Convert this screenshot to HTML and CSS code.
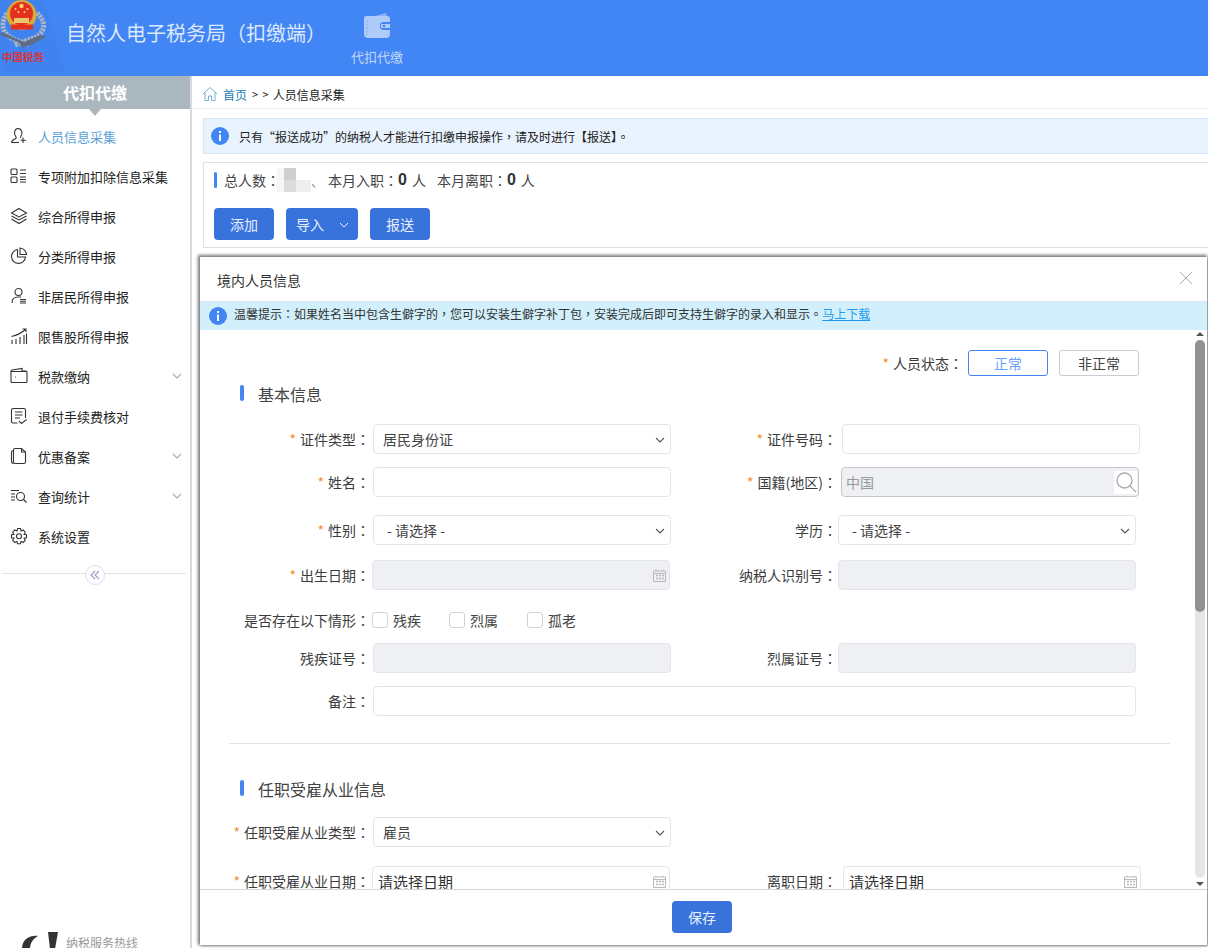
FILE: index.html
```html
<!DOCTYPE html>
<html lang="zh-CN">
<head>
<meta charset="utf-8">
<title>自然人电子税务局（扣缴端）</title>
<link rel="stylesheet" href="styles.css">
</head>
<body>
<div class="app">
  <header class="topbar">
    <svg class="logo" viewBox="0 0 65 76" width="65" height="76">
      <polygon points="0,0 44,0 65,72 8,72 0,60" fill="#3f82f0"/>
      <g fill="none" stroke="#aab5c3" stroke-width="5" stroke-dasharray="2.5 1">
        <path d="M7 13 C0 24 2 33 13 39 L30 45"/>
        <path d="M37 13 C46 22 46 31 36 37 L15 45"/>
      </g>
      <path d="M0 35 L18 42 L23 48 L33 44 L46 37 L40 35 L24 42 L15 38 L2 32Z" fill="#5f6d86"/>
      <circle cx="21.500" cy="15" r="15" fill="#d9a93a"/>
      <circle cx="21.500" cy="13.500" r="11.500" fill="#e6301f"/>
      <rect x="14" y="18" width="15" height="5" fill="#e6c76c"/>
      <rect x="11" y="24.500" width="22" height="5" fill="#e6301f"/>
      <g fill="#f6d76a"><circle cx="21.500" cy="6" r="2.200"/><circle cx="15.500" cy="9" r="1"/><circle cx="27.500" cy="9" r="1"/><circle cx="18.500" cy="12" r="1"/><circle cx="24.500" cy="12" r="1"/></g>
      <text class="logo-text" x="2" y="61">中国税务</text>
    </svg>
    <h1 class="title">自然人电子税务局（扣缴端）</h1>
    <div class="topnav">
      <svg viewBox="0 0 28 26" width="28" height="26">
        <path d="M9 4 L23 0 L24 4Z" fill="#8eb4f6"/>
        <path d="M3 3 H24 Q27 3 27 6 V9 H21 Q17 9 17 13 Q17 17 21 17 H27 V21 Q27 25 23 25 H5 Q1 25 1 21 V6 Q1 3 3 3Z" fill="#afcbf9"/>
        <path d="M18 10.500 H27.500 V15.500 H18 Q16.500 13 18 10.500Z" fill="#afcbf9" stroke="#4285f4" stroke-width="1"/>
        <circle cx="21" cy="13" r="1.300" fill="#4285f4"/>
        <path d="M4 7 V22" stroke="#7fa9f4" stroke-width="1" stroke-dasharray="2 1.500"/>
      </svg>
      <span>代扣代缴</span>
    </div>
  </header>
  <div class="content">
    <aside class="sidebar">
      <div class="side-title">代扣代缴</div>
      <nav class="menu">
        <a class="menu-item active">
          <svg class="ic" viewBox="0 0 18 18"><path d="M1.500 15.500 C2 12.500 5 12 6 11.500 C6.500 10.500 6 10 5.500 9 C4 7 3.800 2 8 1.500 C12.500 1.500 12.500 7 11 9 C10.500 10 10.500 10.500 10.800 11"/><path d="M1.500 15.500 H9"/><path d="M13 10.500 V16 M10.500 13.300 H16" /></svg>
          <span>人员信息采集</span>
        </a>
        <a class="menu-item">
          <svg class="ic" viewBox="0 0 18 18"><rect x="1" y="2" width="6" height="5.500" rx="1"/><rect x="1" y="10" width="6" height="5.500" rx="1"/><path d="M10 3 H16 M10 6.500 H16 M10 10 H16 M10 12.500 H16 M10 15 H16"/></svg>
          <span>专项附加扣除信息采集</span>
        </a>
        <a class="menu-item">
          <svg class="ic" viewBox="0 0 18 18"><path d="M9 1.500 L16.500 6 L9 10 L1.500 6Z"/><path d="M1.500 9 L9 13 L16.500 9"/><path d="M1.500 12 L9 16.500 L16.500 12"/></svg>
          <span>综合所得申报</span>
        </a>
        <a class="menu-item">
          <svg class="ic" viewBox="0 0 18 18"><path d="M7.500 2.500 A7 7 0 1 0 15.500 10 H7.500Z"/><path d="M10 1 A7 7 0 0 1 16.500 7.500 H10Z"/></svg>
          <span>分类所得申报</span>
        </a>
        <a class="menu-item">
          <svg class="ic" viewBox="0 0 18 18"><circle cx="8.500" cy="5" r="3.500"/><path d="M2 16 C2 12 4.500 10 8 10 H11"/><path d="M10 12.500 H16 M10 14.300 H16 M10 16 H16"/></svg>
          <span>非居民所得申报</span>
        </a>
        <a class="menu-item">
          <svg class="ic" viewBox="0 0 18 18"><path d="M1.500 9.500 C6 8.500 11 6.500 15.500 2.500 M12.500 2 H16 V5"/><path d="M2 13 V17 M6 12 V17 M10 10 V17 M14 8 V17 M16.500 6.500 V17"/></svg>
          <span>限售股所得申报</span>
        </a>
        <a class="menu-item">
          <svg class="ic" viewBox="0 0 18 18"><path d="M2 3 L12 1.500 V4 H16 Q17 4 17 5 V14.500 Q17 15.500 16 15.500 H2 Q1 15.500 1 14.500 V4 Q1 3 2 3Z"/><path d="M1 4.500 H16 M5 10 H5.800"/></svg>
          <span>税款缴纳</span>
          <svg class="caret" viewBox="0 0 10 6"><path d="M1 1 L5 5 L9 1"/></svg>
        </a>
        <a class="menu-item">
          <svg class="ic" viewBox="0 0 18 18"><path d="M7.500 16 H3 Q1.500 16 1.500 14.500 V3 Q1.500 1.500 3 1.500 H14 Q15.500 1.500 15.500 3 V11"/><path d="M5 5 H12.500 M5 8 H12.500 M5 11 H10"/><path d="M9 14 L11.500 16.500 L16.500 12.500"/></svg>
          <span>退付手续费核对</span>
        </a>
        <a class="menu-item">
          <svg class="ic" viewBox="0 0 18 18"><path d="M5 1.500 H11.500 L15.500 5 V15 Q15.500 16.500 14 16.500 H5 Q3.500 16.500 3.500 15 V3 Q3.500 1.500 5 1.500Z"/><path d="M3.500 3.500 Q1.500 3.500 1.500 5.500 V14 Q1.500 16.500 3.500 16.500"/><path d="M11.500 1.500 V5 H15.500"/></svg>
          <span>优惠备案</span>
          <svg class="caret" viewBox="0 0 10 6"><path d="M1 1 L5 5 L9 1"/></svg>
        </a>
        <a class="menu-item">
          <svg class="ic" viewBox="0 0 18 18"><path d="M1 3.500 H9 M1 7 H5 M1 10 H5 M1 13 H5"/><circle cx="10.500" cy="9.500" r="4"/><path d="M13.500 12.500 L16.500 15.500"/></svg>
          <span>查询统计</span>
          <svg class="caret" viewBox="0 0 10 6"><path d="M1 1 L5 5 L9 1"/></svg>
        </a>
        <a class="menu-item">
          <svg class="ic" viewBox="0 0 18 18"><path d="M7.500 1.500 H10.500 L11 4 L13.200 3 L15.300 5.200 L14 7.300 L16.500 7.800 V10.700 L14 11.200 L15.300 13.300 L13.200 15.500 L11 14.300 L10.500 16.800 H7.500 L7 14.300 L4.800 15.500 L2.700 13.300 L4 11.200 L1.500 10.700 V7.800 L4 7.300 L2.700 5.200 L4.800 3 L7 4Z"/><circle cx="9" cy="9.200" r="2.500"/></svg>
          <span>系统设置</span>
        </a>
      </nav>
      <div class="collapse">
        <span class="collapse-btn">
          <svg viewBox="0 0 10 10" width="10" height="10"><path d="M5 1 L1 5 L5 9 M9 1 L5 5 L9 9"/></svg>
        </span>
      </div>
      <div class="hotline">
        <svg viewBox="0 0 38 18" width="38" height="18"><path d="M16 5 C8 4 0 8 0 18 H8 C8 12 11 8 16 5Z" fill="#333"/><path d="M26 1 H36 L33 18 H28Z" fill="#333"/></svg>
        <span>纳税服务热线</span>
      </div>
    </aside>
    <main class="main">
      <div class="crumbs">
        <svg viewBox="0 0 16 16" width="16" height="16"><path d="M1 8 L8 1.500 L15 8 M3 6.500 V14.500 H6.500 V10 H9.500 V14.500 H13 V6.500" fill="none" stroke="#6fb0d6" stroke-width="1"/></svg>
        <a class="crumb-link">首页</a>
        <span class="crumb-sep">&gt; &gt;</span>
        <span>人员信息采集</span>
      </div>
      <div class="notice">
        <svg class="info" viewBox="0 0 18 18"><circle cx="9" cy="9" r="9" fill="#4285f4"/><rect x="8" y="4" width="2" height="2" fill="#fff"/><rect x="8" y="7.500" width="2" height="6.500" fill="#fff"/></svg>
        <span>只有“报送成功”的纳税人才能进行扣缴申报操作<span class="tc" lang="zh-TW">，</span>请及时进行【报送】<span class="tc" lang="zh-TW">。</span></span>
      </div>
      <section class="panel">
        <div class="stats">
          <i class="vbar"></i>
          <span class="stat-label">总人数<span class="tc" lang="zh-TW">：</span></span>
          <span class="mosaic"><i class="m0"></i><i class="m1"></i><i class="m2"></i><i class="m0"></i><i class="m3"></i><i class="m4"></i></span>
          <span class="stat-tail">、</span>
          <span class="stat-label stat-gap">本月入职<span class="tc" lang="zh-TW">：</span></span><b>0</b><span class="unit">人</span>
          <span class="stat-label stat-gap2">本月离职<span class="tc" lang="zh-TW">：</span></span><b>0</b><span class="unit">人</span>
        </div>
        <div class="actions">
          <button class="btn w60">添加</button>
          <button class="btn w72">导入<svg class="btn-caret" viewBox="0 0 10 6"><path d="M1 1 L5 5 L9 1"/></svg></button>
          <button class="btn w60">报送</button>
        </div>
      </section>
    </main>
  </div>

  <div class="modal">
    <div class="modal-head">
      <span>境内人员信息</span>
      <svg class="close" viewBox="0 0 14 14" width="14" height="14"><path d="M1 1 L13 13 M13 1 L1 13"/></svg>
    </div>
    <div class="tip">
      <svg class="info" viewBox="0 0 18 18"><circle cx="9" cy="9" r="9" fill="#4285f4"/><rect x="8" y="4" width="2" height="2" fill="#fff"/><rect x="8" y="7.500" width="2" height="6.500" fill="#fff"/></svg>
      <span>温馨提示<span class="tc" lang="zh-TW">：</span>如果姓名当中包含生僻字的<span class="tc" lang="zh-TW">，</span>您可以安装生僻字补丁包<span class="tc" lang="zh-TW">，</span>安装完成后即可支持生僻字的录入和显示<span class="tc" lang="zh-TW">。</span></span>
      <a class="tip-link">马上下载</a>
    </div>
    <div class="modal-body">
      <div class="form">
        <div class="status">
          <span class="label"><em>*</em>人员状态<span class="tc" lang="zh-TW">：</span></span>
          <button class="toggle on">正常</button>
          <button class="toggle">非正常</button>
        </div>
        <h2 class="sec sec1">基本信息</h2>

        <div class="row c-842 r1">
          <label class="label"><em>*</em>证件类型<span class="tc" lang="zh-TW">：</span></label>
          <div class="inp sel"><span>居民身份证</span><svg class="sel-caret" viewBox="0 0 10 6"><path d="M1 1 L5 5 L9 1"/></svg></div>
          <label class="label"><em>*</em>证件号码<span class="tc" lang="zh-TW">：</span></label>
          <div class="inp"></div>
        </div>

        <div class="row c-841 r2">
          <label class="label"><em>*</em>姓名<span class="tc" lang="zh-TW">：</span></label>
          <div class="inp"></div>
          <label class="label"><em>*</em>国籍(地区)<span class="tc" lang="zh-TW">：</span></label>
          <div class="inp off dark up1"><span class="muted">中国</span><span class="search"><svg viewBox="0 0 22 22" width="22" height="22"><circle cx="9.500" cy="9.500" r="7.500"/><path d="M15 15 L21 21"/></svg></span></div>
        </div>

        <div class="row c-838 r3">
          <label class="label"><em>*</em>性别<span class="tc" lang="zh-TW">：</span></label>
          <div class="inp sel"><span class="pick">- 请选择 -</span><svg class="sel-caret" viewBox="0 0 10 6"><path d="M1 1 L5 5 L9 1"/></svg></div>
          <label class="label">学历<span class="tc" lang="zh-TW">：</span></label>
          <div class="inp sel"><span class="pick">- 请选择 -</span><svg class="sel-caret" viewBox="0 0 10 6"><path d="M1 1 L5 5 L9 1"/></svg></div>
        </div>

        <div class="row c-dob r4">
          <label class="label"><em>*</em>出生日期<span class="tc" lang="zh-TW">：</span></label>
          <div class="inp off"><svg class="cal" viewBox="0 0 13 13"><path d="M.5 2 H12.500 V12.500 H.5Z M.5 4.500 H12.500 M3 .5 V2 M10 .5 V2"/><path class="cal-dots" d="M3 6.500 H5 M6 6.500 H8 M9 6.500 H11 M3 9.500 H5 M6 9.500 H8 M9 9.500 H11"/></svg></div>
          <label class="label">纳税人识别号<span class="tc" lang="zh-TW">：</span></label>
          <div class="inp off"></div>
        </div>

        <div class="row c-check r5">
          <label class="label">是否存在以下情形<span class="tc" lang="zh-TW">：</span></label>
          <div class="checks">
            <label class="check"><i></i>残疾</label>
            <label class="check"><i></i>烈属</label>
            <label class="check"><i></i>孤老</label>
          </div>
        </div>

        <div class="row c-838 r6">
          <label class="label">残疾证号<span class="tc" lang="zh-TW">：</span></label>
          <div class="inp off"></div>
          <label class="label">烈属证号<span class="tc" lang="zh-TW">：</span></label>
          <div class="inp off"></div>
        </div>

        <div class="row c-wide r7">
          <label class="label">备注<span class="tc" lang="zh-TW">：</span></label>
          <div class="inp"></div>
        </div>

        <hr class="divider">
        <h2 class="sec sec2">任职受雇从业信息</h2>

        <div class="row c-838 r8">
          <label class="label"><em>*</em>任职受雇从业类型<span class="tc" lang="zh-TW">：</span></label>
          <div class="inp sel"><span>雇员</span><svg class="sel-caret" viewBox="0 0 10 6"><path d="M1 1 L5 5 L9 1"/></svg></div>
        </div>

        <div class="row c-date r9">
          <label class="label"><em>*</em>任职受雇从业日期<span class="tc" lang="zh-TW">：</span></label>
          <div class="inp date"><span>请选择日期</span><svg class="cal" viewBox="0 0 13 13"><path d="M.5 2 H12.500 V12.500 H.5Z M.5 4.500 H12.500 M3 .5 V2 M10 .5 V2"/><path class="cal-dots" d="M3 6.500 H5 M6 6.500 H8 M9 6.500 H11 M3 9.500 H5 M6 9.500 H8 M9 9.500 H11"/></svg></div>
          <label class="label">离职日期<span class="tc" lang="zh-TW">：</span></label>
          <div class="inp date"><span>请选择日期</span><svg class="cal" viewBox="0 0 13 13"><path d="M.5 2 H12.500 V12.500 H.5Z M.5 4.500 H12.500 M3 .5 V2 M10 .5 V2"/><path class="cal-dots" d="M3 6.500 H5 M6 6.500 H8 M9 6.500 H11 M3 9.500 H5 M6 9.500 H8 M9 9.500 H11"/></svg></div>
        </div>
      </div>
      <div class="scrollbar">
        <i class="arrow up"></i>
        <div class="track"><div class="thumb"></div></div>
        <i class="arrow down"></i>
      </div>
    </div>
    <div class="modal-foot">
      <button class="btn w60 save">保存</button>
    </div>
  </div>
</div>
</body>
</html>
```
FILE: styles.css
```css
* { box-sizing: border-box; }
html, body { margin: 0; padding: 0; height: 948px; overflow: hidden; background: #fff; }
body { font-family: "Noto Sans CJK SC", "Liberation Sans", sans-serif; font-size: 13px; color: #333; }
.tc { font-family: "Noto Sans CJK TC", "Noto Sans CJK SC", sans-serif; }
button { font-family: inherit; cursor: pointer; }

.app { position: relative; width: 1208px; height: 948px; display: flex; flex-direction: column; overflow: hidden; }

/* top bar */
.topbar { height: 76px; flex: none; background: #4285f4; display: flex; align-items: flex-start; }
.logo { flex: none; display: block; }
.logo-text { font-family: "Noto Sans CJK SC", serif; font-weight: 700; font-size: 10.500px; fill: #d8353a; }
.title { margin: 19px 0 0 1px; padding: 0; font-size: 20px; font-weight: 400; line-height: 28px; color: #dce8fc; width: 285px; white-space: nowrap; }
.topnav { width: 52px; margin-top: 13px; display: flex; flex-direction: column; align-items: center; color: #c4d8fb; font-size: 13px; line-height: 18px; }
.topnav svg { margin-bottom: 9px; }
.topnav span { white-space: nowrap; }

.content { flex: 1; display: flex; min-height: 0; }

/* sidebar */
.sidebar { width: 192px; flex: none; border-right: 2px solid #d9d9d9; display: flex; flex-direction: column; overflow: hidden; }
.side-title { position: relative; height: 33px; flex: none; background: #abb7bf; color: #fff; font-size: 16px; font-weight: 700; line-height: 33px; text-align: center; }
.side-title::after { content: ""; position: absolute; left: 89px; bottom: -7px; border: 6px solid transparent; border-bottom: 0; border-top: 7px solid #abb7bf; }
.menu { margin-top: 7px; display: flex; flex-direction: column; }
.menu-item { height: 40px; display: flex; align-items: center; padding-left: 10px; color: #222; font-size: 13px; position: relative; white-space: nowrap; }
.menu-item span { margin-left: 10px; }
.menu-item.active { color: #5a9fd6; }
.ic { width: 18px; height: 18px; flex: none; fill: none; stroke: #333; stroke-width: 1.100; }
.caret { position: absolute; left: 172px; top: 17px; width: 10px; height: 6px; fill: none; stroke: #aaa; stroke-width: 1.100; }
.collapse { margin: 17px 4px 0 2px; height: 1px; background: #e2e2e2; position: relative; }
.collapse-btn { position: absolute; left: 83px; top: -8px; width: 20px; height: 20px; border: 1px solid #dcdfe6; border-radius: 50%; background: #fff; display: flex; align-items: center; justify-content: center; }
.collapse-btn svg { fill: none; stroke: #9aa3c4; stroke-width: 1.200; }
.hotline { margin-top: auto; height: 17px; padding-left: 22px; display: flex; align-items: flex-start; color: #999; font-size: 12px; line-height: 20px; }
.hotline svg { flex: none; margin-right: 6px; }
.hotline span { margin-top: 2px; }

/* main */
.main { flex: 1; min-width: 0; padding-left: 0; }
.crumbs { height: 33px; display: flex; align-items: center; padding: 4px 0 0 10px; font-size: 12px; color: #222; border-bottom: 1px solid #eee; }
.crumb-link { color: #1a7db8; margin-left: 5px; }
.crumb-sep { margin: 0 3px 0 5px; font-size: 11px; letter-spacing: 1px; }
.notice { margin: 9px 0 0 11px; height: 36px; background: #e8f3fe; border: 1px solid #d5e6f8; border-right: 0; display: flex; align-items: center; padding-left: 7px; font-size: 12px; color: #222; white-space: nowrap; }
.info { width: 18px; height: 18px; flex: none; margin-right: 10px; }
.panel { margin: 8px 0 0 11px; height: 86px; border: 1px solid #e0e0e0; border-right: 0; padding: 8px 10px 0; }
.stats { height: 18px; display: flex; align-items: center; color: #444; font-size: 14px; white-space: nowrap; }
.vbar { width: 3px; height: 16px; border-radius: 1.500px; background: #4285f4; margin-right: 7px; }
.mosaic { width: 34px; height: 24px; margin: 0 0 0 -3px; display: grid; grid-template-columns: 7px 12px 15px; grid-template-rows: 12px 12px; }
.m0 { background: #f6f6f6; }
.m1 { background: #cfcfcf; }
.m2 { background: #fff; }
.m3 { background: #dcdcdc; }
.m4 { background: #eee; }
.stat-tail { width: 12px; color: #888; font-size: 13px; }
.stat-gap { margin-left: 5px; }
.stat-gap2 { margin-left: 11px; }
.stats b { font-family: "Liberation Sans", sans-serif; font-size: 16px; color: #333; margin-right: 5px; }
.unit { color: #444; }
.actions { margin-top: 19px; display: flex; gap: 12px; }
.btn { height: 32px; padding: 0; border: 0; border-radius: 4px; background: #3873dc; color: #e9f0fd; font-size: 14px; line-height: 32px; display: flex; align-items: center; justify-content: center; }
.w60 { width: 60px; }
.w72 { width: 72px; padding-right: 24px; position: relative; }
.btn-caret { position: absolute; left: 53px; top: 14px; width: 10px; height: 6px; fill: none; stroke: #e9f0fd; stroke-width: 1; }

/* modal */
.modal { position: absolute; left: 200px; top: 257px; width: 1007px; height: 688px; background: #fff; display: flex; flex-direction: column; box-shadow: -1px -1px 3px 1px #777, 1px 1px 2px #999; }
.modal-head { height: 44px; flex: none; display: flex; align-items: center; justify-content: space-between; padding: 2px 14px 0 17px; font-size: 14px; color: #333; }
.close { fill: none; stroke: #aaa; stroke-width: 1; margin-bottom: 4px; }
.tip { height: 29px; flex: none; background: #d1f0fb; border-top: 1px solid #dde8ee; display: flex; align-items: center; padding: 0 0 5px 9px; font-size: 12px; color: #333; white-space: nowrap; }
.tip .info { margin: 5px 7px 0 0; }
.tip-link { color: #1e9bf0; text-decoration: underline; }
.modal-body { flex: 1; min-height: 0; position: relative; overflow: hidden; display: flex; }
.modal-foot { height: 56px; flex: none; border-top: 1px solid #d5d5d8; display: flex; justify-content: center; padding: 11px 0 0 0; }
.save { margin-right: 3px; }

/* form */
.form { flex: 1; min-width: 0; padding-top: 20px; }
.status { height: 26px; display: flex; align-items: center; justify-content: flex-end; padding-right: 68px; gap: 11px; }
.status .label { margin-right: -6px; padding-right: 0; }
.label { display: block; color: #3c3c3c; font-size: 14px; text-align: right; white-space: nowrap; padding-right: 3px; }
.label em { color: #f58a2c; font-style: normal; margin-right: 4px; }
.toggle { width: 80px; height: 26px; padding: 0; background: #fff; border: 1px solid #c9ccd4; border-radius: 3px; color: #444; font-size: 14px; line-height: 24px; }
.toggle.on { border-color: #4285f4; color: #6d9ff5; }
.sec { margin: 0; padding: 0 0 0 58px; font-size: 16px; font-weight: 400; line-height: 18px; height: 20px; color: #444; position: relative; }
.sec::before { content: ""; position: absolute; left: 40px; top: 0; width: 4px; height: 16px; border-radius: 2px; background: #4285f4; }
.sec1 { margin-top: 9px; }
.sec2 { margin-top: 36px; }
.row { display: grid; height: 30px; align-items: center; }
.c-842 { grid-template-columns: 173px 298px 171px 298px; }
.c-841 { grid-template-columns: 173px 298px 170px 298px; }
.c-838 { grid-template-columns: 173px 298px 167px 298px; }
.c-dob { grid-template-columns: 172px 298px 168px 298px; }
.c-check { grid-template-columns: 172px 400px; }
.c-date { grid-template-columns: 172px 298px 173px 298px; }
.c-wide { grid-template-columns: 173px 763px; }
.c-dob > .label:first-child, .c-date > .label:first-child, .c-check > .label:first-child { padding-right: 2px; }
.c-842 > .label:nth-child(3) { padding-right: 5px; }
.c-841 > .label:nth-child(3) { padding-right: 4px; }
.c-838 > .label:nth-child(3), .c-dob > .label:nth-child(3) { padding-right: 1px; }
.c-date > .label:nth-child(3) { padding-right: 6px; }
.r1 { margin-top: 19px; }
.r2 { margin-top: 13px; }
.r3 { margin-top: 18px; }
.r4 { margin-top: 15px; }
.r5 { margin-top: 20px; height: 20px; }
.r6 { margin-top: 13px; }
.r7 { margin-top: 13px; }
.r8 { margin-top: 17px; }
.r9 { margin-top: 19px; }
.inp { height: 30px; position: relative; border: 1px solid #e3e5ea; border-radius: 4px; background: #fff; font-size: 14px; color: #444; line-height: 28px; padding-left: 9px; white-space: nowrap; }
.inp.off { background: #eff0f4; }
.inp.dark { border-color: #c4c6cc; padding-left: 4px; }
.up1 { margin-top: -1px; }
.muted { color: #999; font-size: 14px; }
.pick { margin-left: 4px; }
.sel-caret { position: absolute; right: 5px; top: 12px; width: 10px; height: 6px; fill: none; stroke: #555; stroke-width: 1.100; }
.search { position: absolute; right: 1px; top: 3px; width: 23px; height: 23px; background: #fff; display: flex; align-items: center; justify-content: center; }
.search svg { fill: none; stroke: #aaa; stroke-width: 1.300; }
.cal { position: absolute; right: 3px; top: 8px; width: 13px; height: 13px; fill: none; stroke: #b9b9b9; stroke-width: 1; }
.cal-dots { stroke-width: 1.600; }
.date { padding-left: 5px; font-size: 15px; color: #333; line-height: 30px; }
.checks { display: flex; align-items: center; font-size: 14px; color: #444; margin-top: -1px; }
.check { display: flex; align-items: center; width: 77px; }
.check:nth-child(2) { width: 78px; }
.check i { width: 16px; height: 16px; border: 1px solid #cfd2d8; border-radius: 3px; background: #fff; margin-right: 5px; }
.divider { margin: 27px 0 0 29px; width: 941px; height: 1px; border: 0; background: #e2e2e2; }

/* scrollbar */
.scrollbar { width: 13px; flex: none; display: flex; flex-direction: column; align-items: center; padding-top: 2px; position: absolute; right: 1px; top: 0; bottom: 0; }
.track { flex: 1; width: 10px; margin: 4px 0; background: #e6e6e6; border-radius: 5px; min-height: 0; }
.thumb { height: 272px; width: 10px; border-radius: 5px; background: #929292; }
.arrow { display: block; width: 0; height: 0; border: 4px solid transparent; flex: none; }
.arrow.up { border-top: 0; border-bottom: 4px solid #555; }
.arrow.down { border-bottom: 0; border-top: 4px solid #555; margin-bottom: 3px; }
```
